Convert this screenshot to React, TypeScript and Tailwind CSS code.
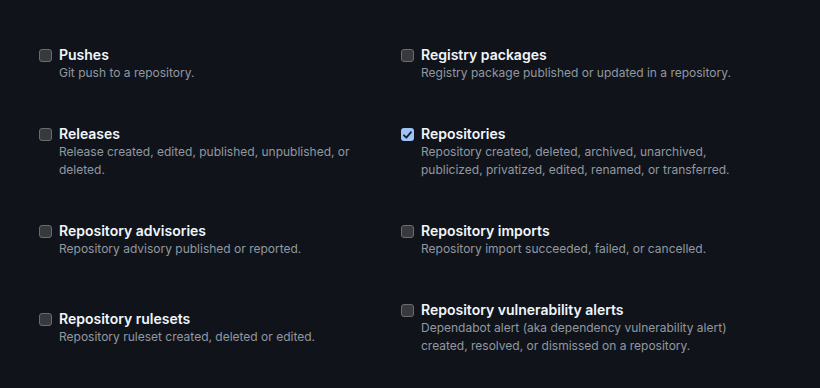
import React from "react";

type EventItem = {
  title: string;
  description: string;
  checked?: boolean;
};

const events: EventItem[] = [
  { title: "Pushes", description: "Git push to a repository." },
  {
    title: "Registry packages",
    description: "Registry package published or updated in a repository.",
  },
  {
    title: "Releases",
    description:
      "Release created, edited, published, unpublished, or deleted.",
  },
  {
    title: "Repositories",
    description:
      "Repository created, deleted, archived, unarchived, publicized, privatized, edited, renamed, or transferred.",
    checked: true,
  },
  {
    title: "Repository advisories",
    description: "Repository advisory published or reported.",
  },
  {
    title: "Repository imports",
    description: "Repository import succeeded, failed, or cancelled.",
  },
  {
    title: "Repository rulesets",
    description: "Repository ruleset created, deleted or edited.",
  },
  {
    title: "Repository vulnerability alerts",
    description:
      "Dependabot alert (aka dependency vulnerability alert) created, resolved, or dismissed on a repository.",
  },
];

const Checkbox: React.FC<{ checked?: boolean }> = ({ checked }) => {
  if (checked) {
    return (
      <span className="mt-[3px] w-[13px] h-[13px] shrink-0 rounded-[3px] bg-[#9ec3fb] flex items-center justify-center">
        <svg width="9" height="8" viewBox="0 0 9 8" fill="none">
          <path
            d="M1 4.3 L3.4 6.6 L8 1.2"
            stroke="#1b1f24"
            strokeWidth="1.8"
            strokeLinecap="round"
            strokeLinejoin="round"
          />
        </svg>
      </span>
    );
  }
  return (
    <span className="mt-[3px] w-[13px] h-[13px] shrink-0 rounded-[3px] bg-[#38393c] border border-[#6a6c70]" />
  );
};

const EventRow: React.FC<{ item: EventItem }> = ({ item }) => {
  return (
    <label className="flex items-start gap-[7px]">
      <Checkbox checked={item.checked} />
      <div className="flex flex-col max-w-[312px]">
        <p className="text-[14px] leading-[18px] font-semibold text-[#f0f6fc]">
          {item.title}
        </p>
        <p className="text-[12px] leading-[18px] text-[#9198a1]">
          {item.description}
        </p>
      </div>
    </label>
  );
};

export default function App() {
  return (
    <div
      className="w-[820px] h-[388px] bg-[#10141a] overflow-hidden pt-5 pl-[39px]"
      style={{ fontFamily: "Inter, 'Noto Sans', sans-serif" }}
    >
      <div className="grid grid-cols-[362px_340px] auto-rows-[88px] items-center">
        {events.map((e) => (
          <EventRow key={e.title} item={e} />
        ))}
      </div>
    </div>
  );
}
